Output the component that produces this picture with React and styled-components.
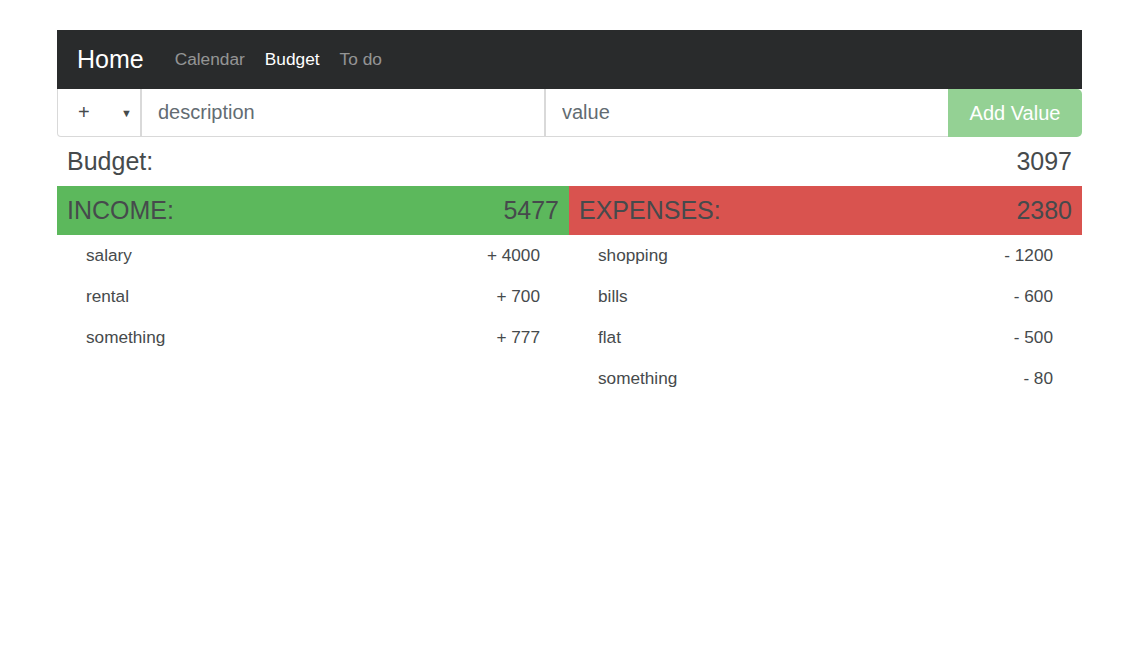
import React from 'react';
import styled, { createGlobalStyle } from 'styled-components';

const GlobalStyle = createGlobalStyle`
  body {
    margin: 0;
    background: #fff;
    font-family: 'Liberation Sans', Arial, sans-serif;
    color: #464a4c;
  }
`;

const Page = styled.div`
  width: 1025px;
  margin: 30px 0 0 57px;
`;

const Navbar = styled.nav`
  display: flex;
  align-items: center;
  height: 59px;
  padding: 0 20px;
  background: #292b2c;
`;

const Brand = styled.span`
  font-size: 25px;
  color: #fff;
  margin-right: 31px;
`;

const NavLink = styled.span`
  font-size: 17.3px;
  margin-right: 20px;
  color: ${({ active }) => (active ? '#fff' : 'rgba(255,255,255,0.5)')};
`;

const InputGroup = styled.div`
  display: flex;
  height: 48px;
  box-sizing: border-box;
`;

const SelectBox = styled.div`
  display: flex;
  align-items: center;
  justify-content: space-between;
  width: 85px;
  box-sizing: border-box;
  padding: 0 8px 0 20px;
  border: 1px solid rgba(0, 0, 0, 0.15);
  border-right-width: 2px;
  border-top: none;
  border-radius: 0 0 0 4px;
  font-size: 20px;
  color: #464a4c;
`;

const Caret = styled.span`
  font-size: 11px;
  color: #464a4c;
`;

const TextInput = styled.input`
  flex: 1;
  min-width: 0;
  box-sizing: border-box;
  height: 48px;
  padding: 0 16px;
  border: 1px solid rgba(0, 0, 0, 0.15);
  border-left: none;
  border-right: ${({ last }) => (last ? 'none' : '2px solid rgba(0,0,0,0.15)')};
  border-top: none;
  font-family: 'Liberation Sans', Arial, sans-serif;
  font-size: 20px;
  color: #464a4c;
  outline: none;
  &::placeholder {
    color: #636c72;
  }
`;

const AddButton = styled.button`
  width: 134px;
  height: 48px;
  border: none;
  border-radius: 0 5px 5px 0;
  background: #94d194;
  color: #fff;
  font-family: 'Liberation Sans', Arial, sans-serif;
  font-size: 20px;
  padding: 0;
`;

const Row = styled.div`
  display: flex;
  align-items: center;
  justify-content: space-between;
  height: 49px;
  padding: 0 10px;
  font-size: 25px;
  color: #464a4c;
  background: ${({ bg }) => bg || 'transparent'};
`;

const Columns = styled.div`
  display: grid;
  grid-template-columns: 512px 1fr;
`;

const List = styled.ul`
  list-style: none;
  margin: 0;
  padding: 0;
`;

const Item = styled.li`
  display: flex;
  justify-content: space-between;
  align-items: center;
  height: 41px;
  padding: 0 29px;
  font-size: 17.2px;
  color: #464a4c;
`;

const income = [
  ['salary', '+ 4000'],
  ['rental', '+ 700'],
  ['something', '+ 777'],
];

const expenses = [
  ['shopping', '- 1200'],
  ['bills', '- 600'],
  ['flat', '- 500'],
  ['something', '- 80'],
];

const App = () => (
  <>
    <GlobalStyle />
    <Page>
      <Navbar>
        <Brand>Home</Brand>
        <NavLink>Calendar</NavLink>
        <NavLink active>Budget</NavLink>
        <NavLink>To do</NavLink>
      </Navbar>
      <InputGroup>
        <SelectBox>
          <span>+</span>
          <Caret>▼</Caret>
        </SelectBox>
        <TextInput placeholder="description" />
        <TextInput placeholder="value" last />
        <AddButton>Add Value</AddButton>
      </InputGroup>
      <Row>
        <span>Budget:</span>
        <span>3097</span>
      </Row>
      <Columns>
        <div>
          <Row bg="#5cb85c">
            <span>INCOME:</span>
            <span>5477</span>
          </Row>
          <List>
            {income.map(([name, val]) => (
              <Item key={name}>
                <span>{name}</span>
                <span>{val}</span>
              </Item>
            ))}
          </List>
        </div>
        <div>
          <Row bg="#d9534f">
            <span>EXPENSES:</span>
            <span>2380</span>
          </Row>
          <List>
            {expenses.map(([name, val]) => (
              <Item key={name}>
                <span>{name}</span>
                <span>{val}</span>
              </Item>
            ))}
          </List>
        </div>
      </Columns>
    </Page>
  </>
);

export default App;
